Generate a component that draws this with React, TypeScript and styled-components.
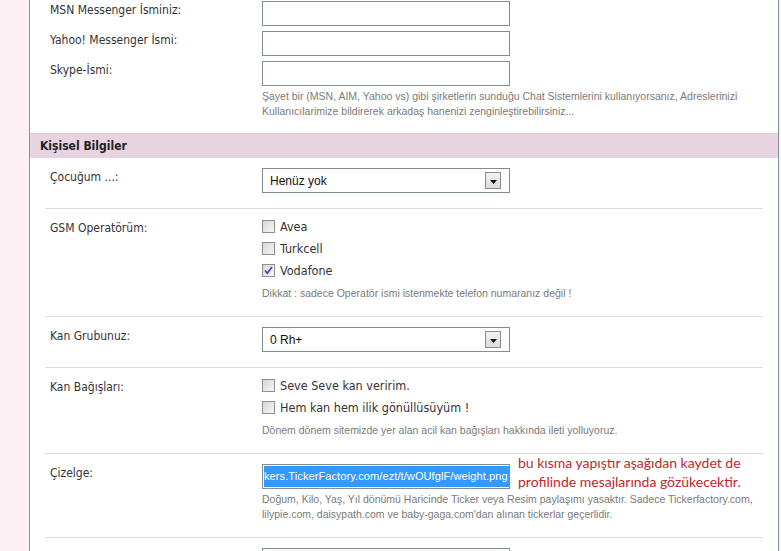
import React from 'react';
import styled, { createGlobalStyle } from 'styled-components';

const GlobalStyle = createGlobalStyle`
  html, body {
    margin: 0;
    padding: 0;
    background: #fcf0f4;
  }
  body {
    font-family: "DejaVu Sans Condensed", "DejaVu Sans", sans-serif;
  }
`;

type RowKind = 'tight' | 'first' | 'line';

const Page = styled.div`
  height: 551px;
  overflow: hidden;
  padding-left: 29px;
`;

const Panel = styled.div`
  width: 748px;
  min-height: 620px;
  background: #fff;
  border-left: 1px solid #7b9599;
  border-right: 1px solid #7b9599;
  padding-top: 1px;
`;

const Row = styled.div<{ $kind: RowKind }>`
  display: grid;
  grid-template-columns: 212px 1fr;
  margin: 0 15px;
  padding: ${p => (p.$kind === 'tight' ? '0 0 5px 5px' : '10px 0 15px 5px')};
  border-top: ${p => (p.$kind === 'line' ? '1px solid #dcdcdc' : 'none')};
`;

const Label = styled.div`
  font-size: 12px;
  line-height: 18px;
  color: #333;
`;

const Control = styled.div`
  position: relative;
`;

const TextBox = styled.div`
  box-sizing: border-box;
  width: 248px;
  height: 25px;
  border: 1px solid #838c8e;
  background: #fff;
  padding: 1px 0 1px 1px;
  overflow: hidden;
`;

const Selected = styled.span`
  display: block;
  height: 100%;
  background: #3399ff;
  color: #fff;
  font-family: "Liberation Sans", Arial, sans-serif;
  font-size: 11px;
  letter-spacing: 0.1px;
  line-height: 21px;
  white-space: nowrap;
`;

const SelectBox = styled.div`
  box-sizing: border-box;
  width: 248px;
  height: 25px;
  border: 1px solid #838c8e;
  background: #fff;
  display: flex;
  align-items: center;
  justify-content: space-between;
  padding: 0 8px 0 7px;
  font-family: "Liberation Sans", Arial, sans-serif;
  font-size: 12px;
  color: #111;
`;

const ArrowButton = styled.span`
  box-sizing: border-box;
  width: 16px;
  height: 17px;
  border: 1px solid #8c8c8c;
  background: linear-gradient(#f2f2f2, #dcdcdc);
  display: flex;
  align-items: center;
  justify-content: center;
  padding-top: 2px;
`;

const Help = styled.div`
  margin-top: 3px;
  font-family: "Liberation Sans", Arial, sans-serif;
  font-size: 10.5px;
  line-height: 15px;
  color: #7a7a7a;
`;

const Checks = styled.div`
  margin-top: -4px;
  padding-bottom: 2px;
`;

const CheckItem = styled.label`
  display: flex;
  align-items: center;
  gap: 5px;
  height: 22px;
  font-size: 12.5px;
  color: #333;
`;

const Box = styled.span`
  box-sizing: border-box;
  width: 13px;
  height: 13px;
  border: 1px solid #8e8f8f;
  background: linear-gradient(135deg, #d6d6d6, #f6f6f6);
  display: flex;
  align-items: center;
  justify-content: center;
`;

const Header = styled.div`
  height: 24px;
  margin-top: 9px;
  border-top: 1px solid #dccbd5;
  background: #e8d4e0;
  padding-left: 10px;
  font-size: 12px;
  font-weight: bold;
  line-height: 24px;
  color: #222;
`;

const Note = styled.div`
  position: absolute;
  left: 256px;
  top: -11px;
  font-family: Lato, "Open Sans", sans-serif;
  font-size: 14px;
  line-height: 19px;
  color: #c4262e;
  white-space: nowrap;
`;

const Select = ({ value }: { value: string }) => (
  <SelectBox>
    <span>{value}</span>
    <ArrowButton>
      <svg width="7" height="4" viewBox="0 0 7 4">
        <path d="M0 0h7L3.5 4z" fill="#111" />
      </svg>
    </ArrowButton>
  </SelectBox>
);

const Check = ({ text, on }: { text: string; on?: boolean }) => (
  <CheckItem>
    <Box>
      {on && (
        <svg width="9" height="9" viewBox="0 0 9 9">
          <path d="M1 4.5l2.3 2.8L8 1" stroke="#3f3fa8" strokeWidth="1.6" fill="none" />
        </svg>
      )}
    </Box>
    {text}
  </CheckItem>
);

export default function App() {
  return (
    <>
      <GlobalStyle />
      <Page>
        <Panel>
          <Row $kind="tight">
            <Label>MSN Messenger İsminiz:</Label>
            <Control>
              <TextBox />
            </Control>
          </Row>
          <Row $kind="tight">
            <Label>Yahoo! Messenger İsmi:</Label>
            <Control>
              <TextBox />
            </Control>
          </Row>
          <Row $kind="tight">
            <Label>Skype-İsmi:</Label>
            <Control>
              <TextBox />
              <Help>
                Şayet bir (MSN, AIM, Yahoo vs) gibi şirketlerin sunduğu Chat Sistemlerini kullanıyorsanız, Adreslerinizi
                <br />
                Kullanıcılarimize bildirerek arkadaş hanenizi zenginleştirebilirsiniz...
              </Help>
            </Control>
          </Row>

          <Header>Kişisel Bilgiler</Header>

          <Row $kind="first">
            <Label>Çocuğum ...:</Label>
            <Control>
              <Select value="Henüz yok" />
            </Control>
          </Row>
          <Row $kind="line">
            <Label>GSM Operatörüm:</Label>
            <Control>
              <Checks>
                <Check text="Avea" />
                <Check text="Turkcell" />
                <Check text="Vodafone" on />
              </Checks>
              <Help>Dikkat : sadece Operatör ismi istenmekte telefon numaranız değil !</Help>
            </Control>
          </Row>
          <Row $kind="line">
            <Label>Kan Grubunuz:</Label>
            <Control>
              <Select value="0 Rh+" />
            </Control>
          </Row>
          <Row $kind="line">
            <Label>Kan Bağışları:</Label>
            <Control>
              <Checks>
                <Check text="Seve Seve kan veririm." />
                <Check text="Hem kan hem ilik gönüllüsüyüm !" />
              </Checks>
              <Help>Dönem dönem sitemizde yer alan acil kan bağışları hakkında ileti yolluyoruz.</Help>
            </Control>
          </Row>
          <Row $kind="line">
            <Label>Çizelge:</Label>
            <Control>
              <TextBox>
                <Selected>kers.TickerFactory.com/ezt/t/wOUfglF/weight.png</Selected>
              </TextBox>
              <Note>
                bu kısma yapıştır aşağıdan kaydet de
                <br />
                profilinde mesajlarında gözükecektir.
              </Note>
              <Help>
                Doğum, Kilo, Yaş, Yıl dönümü Haricinde Ticker veya Resim paylaşımı yasaktır. Sadece Tickerfactory.com,
                <br />
                lilypie.com, daisypath.com ve baby-gaga.com'dan alınan tickerlar geçerlidir.
              </Help>
            </Control>
          </Row>
          <Row $kind="line">
            <Label>Bebeğinizin Tahmini Doğum Tarihi:</Label>
            <Control>
              <TextBox />
            </Control>
          </Row>
        </Panel>
      </Page>
    </>
  );
}
